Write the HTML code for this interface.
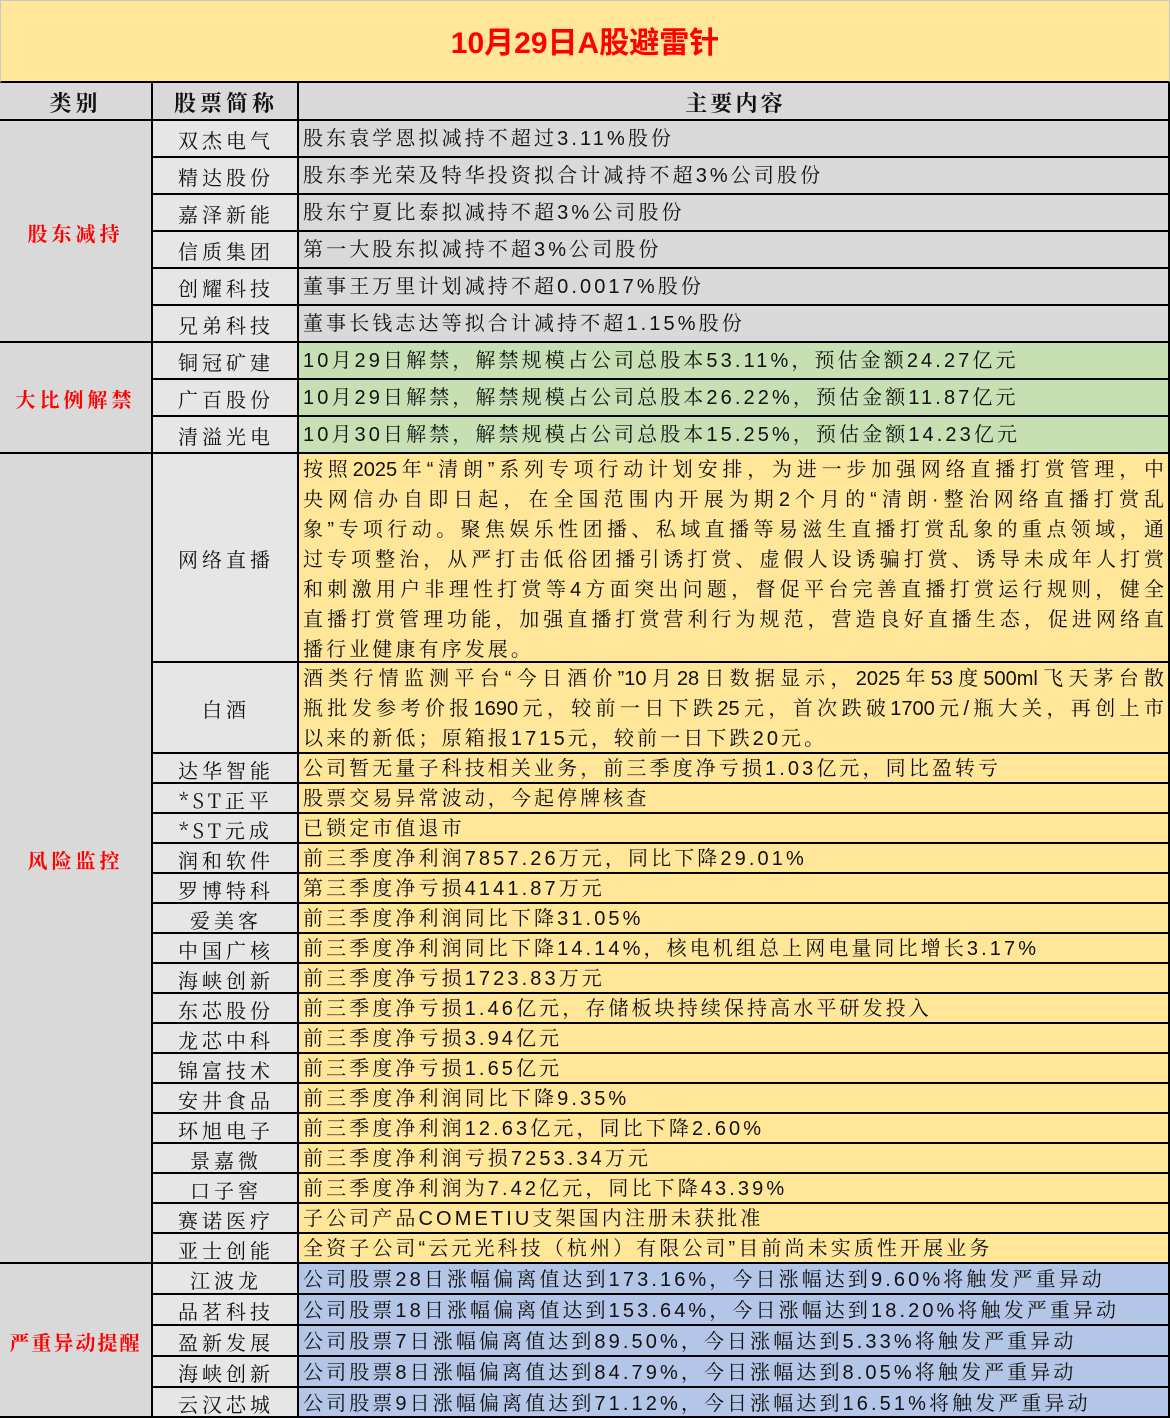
<!DOCTYPE html>
<html><head><meta charset="utf-8">
<style>
*{margin:0;padding:0;box-sizing:border-box}
body{width:1170px;height:1418px;background:#fff;position:relative;overflow:hidden;font-family:"Liberation Sans","Noto Serif CJK SC",serif;color:#111}
.c{position:absolute;border-right:2px solid #000;border-bottom:2px solid #000;overflow:hidden;white-space:nowrap;padding-top:2px}
.cat{left:0;width:153px;background:#D9D9D9;color:#f00;font-weight:bold;font-size:20px;letter-spacing:4px;display:flex;align-items:center;justify-content:center;font-family:"Noto Serif CJK SC",serif}
.nm{left:153px;width:146px;background:#E7E6E6;font-size:20px;letter-spacing:4px;text-align:center;font-family:"Noto Serif CJK SC",serif;padding-left:2px}
.ct{left:299px;width:871px;font-size:20px;letter-spacing:3.1px;padding-left:4px;font-family:"Liberation Sans","Noto Serif CJK SC",serif}
.g{background:#D9D9D9}.gr{background:#C6E0B4}.y{background:#FFE699}.b{background:#B4C6E7}
.ln{text-align:justify;text-align-last:justify;letter-spacing:0;padding-right:4px;height:30px;line-height:30px}
.last{text-align-last:left;letter-spacing:3.1px}
</style></head><body>
<div style="position:absolute;left:0;top:0;width:1170px;height:83px;background:#FFE699;border:1px solid #c8c8c8;border-bottom:2px solid #000;text-align:center;line-height:86px;color:#f00;font-size:30px;font-weight:bold;font-family:'Liberation Sans','Noto Sans CJK SC',sans-serif">10月29日A股避雷针</div>

<div class="c cat" style="top:83px;height:38px;color:#111;font-size:22px">类别</div>
<div class="c nm" style="top:83px;height:38px;line-height:36px;background:#D9D9D9;font-weight:bold;font-size:22px">股票简称</div>
<div class="c ct g" style="top:83px;height:38px;line-height:36px;text-align:center;font-weight:bold;font-size:22px;font-family:'Noto Serif CJK SC',serif">主要内容</div>

<div class="c cat" style="top:121px;height:222px">股东减持</div>
<div class="c nm" style="top:121px;height:37px;line-height:33px">双杰电气</div><div class="c ct g" style="top:121px;height:37px;line-height:33px">股东袁学恩拟减持不超过3.11%股份</div>
<div class="c nm" style="top:158px;height:37px;line-height:33px">精达股份</div><div class="c ct g" style="top:158px;height:37px;line-height:33px">股东李光荣及特华投资拟合计减持不超3%公司股份</div>
<div class="c nm" style="top:195px;height:37px;line-height:33px">嘉泽新能</div><div class="c ct g" style="top:195px;height:37px;line-height:33px">股东宁夏比泰拟减持不超3%公司股份</div>
<div class="c nm" style="top:232px;height:37px;line-height:33px">信质集团</div><div class="c ct g" style="top:232px;height:37px;line-height:33px">第一大股东拟减持不超3%公司股份</div>
<div class="c nm" style="top:269px;height:37px;line-height:33px">创耀科技</div><div class="c ct g" style="top:269px;height:37px;line-height:33px">董事王万里计划减持不超0.0017%股份</div>
<div class="c nm" style="top:306px;height:37px;line-height:33px">兄弟科技</div><div class="c ct g" style="top:306px;height:37px;line-height:33px">董事长钱志达等拟合计减持不超1.15%股份</div>

<div class="c cat" style="top:343px;height:111px">大比例解禁</div>
<div class="c nm" style="top:343px;height:37px;line-height:33px">铜冠矿建</div><div class="c ct gr" style="top:343px;height:37px;line-height:33px">10月29日解禁，解禁规模占公司总股本53.11%，预估金额24.27亿元</div>
<div class="c nm" style="top:380px;height:37px;line-height:33px">广百股份</div><div class="c ct gr" style="top:380px;height:37px;line-height:33px">10月29日解禁，解禁规模占公司总股本26.22%，预估金额11.87亿元</div>
<div class="c nm" style="top:417px;height:37px;line-height:33px">清溢光电</div><div class="c ct gr" style="top:417px;height:37px;line-height:33px">10月30日解禁，解禁规模占公司总股本15.25%，预估金额14.23亿元</div>

<div class="c cat" style="top:454px;height:810px">风险监控</div>
<div class="c nm" style="top:454px;height:209px;line-height:205px">网络直播</div>
<div class="c ct y" style="top:454px;height:209px;padding-top:1px">
<div class="ln">按照2025年“清朗”系列专项行动计划安排，为进一步加强网络直播打赏管理，中</div>
<div class="ln">央网信办自即日起，在全国范围内开展为期2个月的“清朗·整治网络直播打赏乱</div>
<div class="ln">象”专项行动。聚焦娱乐性团播、私域直播等易滋生直播打赏乱象的重点领域，通</div>
<div class="ln">过专项整治，从严打击低俗团播引诱打赏、虚假人设诱骗打赏、诱导未成年人打赏</div>
<div class="ln">和刺激用户非理性打赏等4方面突出问题，督促平台完善直播打赏运行规则，健全</div>
<div class="ln">直播打赏管理功能，加强直播打赏营利行为规范，营造良好直播生态，促进网络直</div>
<div class="ln last">播行业健康有序发展。</div>
</div>
<div class="c nm" style="top:663px;height:91px;line-height:87px">白酒</div>
<div class="c ct y" style="top:663px;height:91px;padding-top:1px">
<div class="ln">酒类行情监测平台“今日酒价”10月28日数据显示，2025年53度500ml飞天茅台散</div>
<div class="ln">瓶批发参考价报1690元，较前一日下跌25元，首次跌破1700元/瓶大关，再创上市</div>
<div class="ln last">以来的新低；原箱报1715元，较前一日下跌20元。</div>
</div>
<div class="c nm" style="top:754px;height:30px;line-height:27px">达华智能</div><div class="c ct y" style="top:754px;height:30px;line-height:27px">公司暂无量子科技相关业务，前三季度净亏损1.03亿元，同比盈转亏</div>
<div class="c nm" style="top:784px;height:30px;line-height:27px">*ST正平</div><div class="c ct y" style="top:784px;height:30px;line-height:27px">股票交易异常波动，今起停牌核查</div>
<div class="c nm" style="top:814px;height:30px;line-height:27px">*ST元成</div><div class="c ct y" style="top:814px;height:30px;line-height:27px">已锁定市值退市</div>
<div class="c nm" style="top:844px;height:30px;line-height:27px">润和软件</div><div class="c ct y" style="top:844px;height:30px;line-height:27px">前三季度净利润7857.26万元，同比下降29.01%</div>
<div class="c nm" style="top:874px;height:30px;line-height:27px">罗博特科</div><div class="c ct y" style="top:874px;height:30px;line-height:27px">第三季度净亏损4141.87万元</div>
<div class="c nm" style="top:904px;height:30px;line-height:27px">爱美客</div><div class="c ct y" style="top:904px;height:30px;line-height:27px">前三季度净利润同比下降31.05%</div>
<div class="c nm" style="top:934px;height:30px;line-height:27px">中国广核</div><div class="c ct y" style="top:934px;height:30px;line-height:27px">前三季度净利润同比下降14.14%，核电机组总上网电量同比增长3.17%</div>
<div class="c nm" style="top:964px;height:30px;line-height:27px">海峡创新</div><div class="c ct y" style="top:964px;height:30px;line-height:27px">前三季度净亏损1723.83万元</div>
<div class="c nm" style="top:994px;height:30px;line-height:27px">东芯股份</div><div class="c ct y" style="top:994px;height:30px;line-height:27px">前三季度净亏损1.46亿元，存储板块持续保持高水平研发投入</div>
<div class="c nm" style="top:1024px;height:30px;line-height:27px">龙芯中科</div><div class="c ct y" style="top:1024px;height:30px;line-height:27px">前三季度净亏损3.94亿元</div>
<div class="c nm" style="top:1054px;height:30px;line-height:27px">锦富技术</div><div class="c ct y" style="top:1054px;height:30px;line-height:27px">前三季度净亏损1.65亿元</div>
<div class="c nm" style="top:1084px;height:30px;line-height:27px">安井食品</div><div class="c ct y" style="top:1084px;height:30px;line-height:27px">前三季度净利润同比下降9.35%</div>
<div class="c nm" style="top:1114px;height:30px;line-height:27px">环旭电子</div><div class="c ct y" style="top:1114px;height:30px;line-height:27px">前三季度净利润12.63亿元，同比下降2.60%</div>
<div class="c nm" style="top:1144px;height:30px;line-height:27px">景嘉微</div><div class="c ct y" style="top:1144px;height:30px;line-height:27px">前三季度净利润亏损7253.34万元</div>
<div class="c nm" style="top:1174px;height:30px;line-height:27px">口子窖</div><div class="c ct y" style="top:1174px;height:30px;line-height:27px">前三季度净利润为7.42亿元，同比下降43.39%</div>
<div class="c nm" style="top:1204px;height:30px;line-height:27px">赛诺医疗</div><div class="c ct y" style="top:1204px;height:30px;line-height:27px">子公司产品COMETIU支架国内注册未获批准</div>
<div class="c nm" style="top:1234px;height:30px;line-height:27px">亚士创能</div><div class="c ct y" style="top:1234px;height:30px;line-height:27px">全资子公司“云元光科技（杭州）有限公司”目前尚未实质性开展业务</div>

<div class="c cat" style="top:1264px;height:154px;letter-spacing:2px">严重异动提醒</div>
<div class="c nm" style="top:1264px;height:31px;line-height:28px">江波龙</div><div class="c ct b" style="top:1264px;height:31px;line-height:28px">公司股票28日涨幅偏离值达到173.16%，今日涨幅达到9.60%将触发严重异动</div>
<div class="c nm" style="top:1295px;height:31px;line-height:28px">品茗科技</div><div class="c ct b" style="top:1295px;height:31px;line-height:28px">公司股票18日涨幅偏离值达到153.64%，今日涨幅达到18.20%将触发严重异动</div>
<div class="c nm" style="top:1326px;height:31px;line-height:28px">盈新发展</div><div class="c ct b" style="top:1326px;height:31px;line-height:28px">公司股票7日涨幅偏离值达到89.50%，今日涨幅达到5.33%将触发严重异动</div>
<div class="c nm" style="top:1357px;height:31px;line-height:28px">海峡创新</div><div class="c ct b" style="top:1357px;height:31px;line-height:28px">公司股票8日涨幅偏离值达到84.79%，今日涨幅达到8.05%将触发严重异动</div>
<div class="c nm" style="top:1388px;height:30px;line-height:28px">云汉芯城</div><div class="c ct b" style="top:1388px;height:30px;line-height:28px">公司股票9日涨幅偏离值达到71.12%，今日涨幅达到16.51%将触发严重异动</div>
</body></html>
